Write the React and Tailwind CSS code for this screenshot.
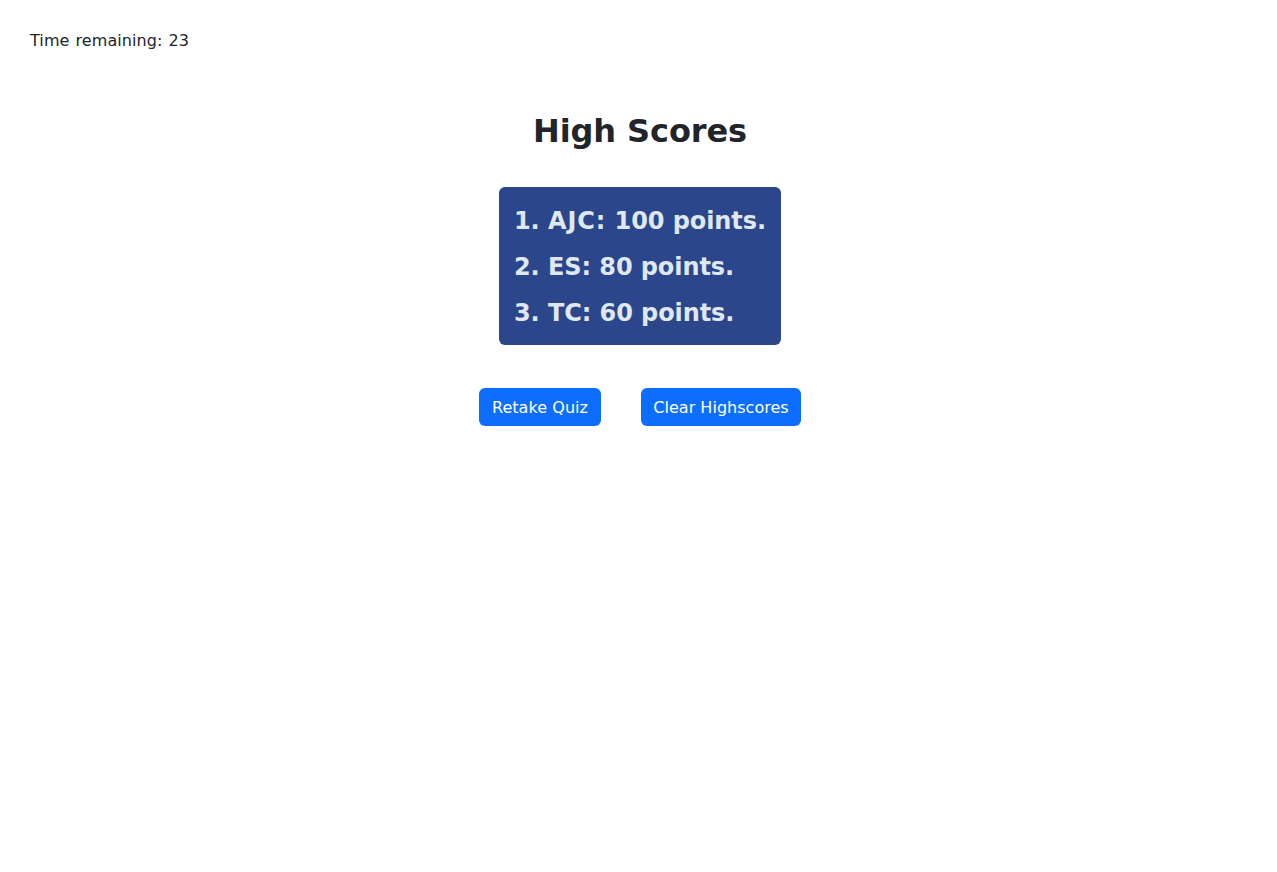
const scores = [
  { name: "AJC", points: 100, nameClass: "tracking-[0.9px]" },
  { name: "ES", points: 80, nameClass: "" },
  { name: "TC", points: 60, nameClass: "" },
];

function Button({ children, className }) {
  return (
    <button className={`h-[38px] shrink-0 rounded-md bg-[#0d6efd] pt-0.5 whitespace-nowrap text-center text-white ${className}`}>
      {children}
    </button>
  );
}

export default function App() {
  return (
    <div className="flex min-h-screen flex-col bg-white font-['DejaVu_Sans',sans-serif] text-base text-[#212529]">
      <header className="pt-[29px] pl-[30px] leading-6 tracking-[0.08px] [word-spacing:0.9px]">Time remaining: 23</header>
      <main className="flex flex-col items-center pt-[59px] pl-[3px]">
        <h1 className="text-[32px] leading-[38px] font-bold tracking-[-0.1px]">High Scores</h1>
        <ol className="mt-[37px] flex h-[158px] w-[282px] flex-col gap-4 rounded-md bg-[#2b468b] pt-[19px] pl-[15px] text-2xl leading-[30px] font-bold tracking-[-0.08px] whitespace-nowrap text-[#dfe8f0]">
          {scores.map((s, i) => (
            <li key={s.name}>
              {`${i + 1}. `}
              <span className={s.nameClass}>{`${s.name}:`}</span>
              {` ${s.points} points.`}
            </li>
          ))}
        </ol>
        <div className="mt-[43px] flex gap-10">
          <Button className="w-[122px] tracking-[0.05px]">Retake Quiz</Button>
          <Button className="w-[160px] tracking-[0.02px]">Clear Highscores</Button>
        </div>
      </main>
    </div>
  );
}
